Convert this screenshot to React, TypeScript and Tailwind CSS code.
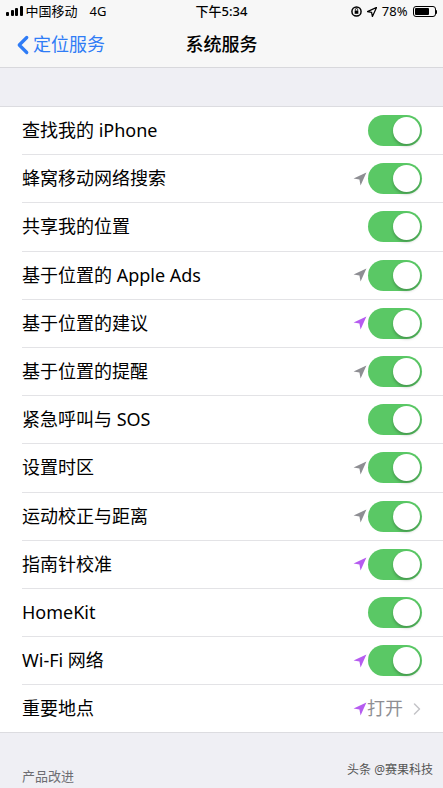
import { ChevronLeft, ChevronRight } from "lucide-react";

type Arrow = "none" | "gray" | "purple";

const rows: { label: string; arrow: Arrow }[] = [
  { label: "查找我的 iPhone", arrow: "none" },
  { label: "蜂窝移动网络搜索", arrow: "gray" },
  { label: "共享我的位置", arrow: "none" },
  { label: "基于位置的 Apple Ads", arrow: "gray" },
  { label: "基于位置的建议", arrow: "purple" },
  { label: "基于位置的提醒", arrow: "gray" },
  { label: "紧急呼叫与 SOS", arrow: "none" },
  { label: "设置时区", arrow: "gray" },
  { label: "运动校正与距离", arrow: "gray" },
  { label: "指南针校准", arrow: "purple" },
  { label: "HomeKit", arrow: "none" },
  { label: "Wi-Fi 网络", arrow: "purple" },
];

const font = { fontFamily: '"Noto Sans", "Noto Sans CJK SC", sans-serif' };

function LocArrow({ color }: { color: Arrow }) {
  const fill = color === "purple" ? "#b65cf0" : "#8e8e93";
  return (
    <svg width="14" height="14" viewBox="0 0 24 24" className="shrink-0">
      <path d="M23 1 L1 11 L11 13 L13 23 Z" fill={fill} />
    </svg>
  );
}

function Toggle() {
  return (
    <div className="flex h-[31px] w-[54px] items-center justify-end rounded-full bg-[#5ac865] p-[2px]">
      <div className="h-[27px] w-[27px] rounded-full bg-white shadow-[0_2px_3px_rgba(0,0,0,0.25)]" />
    </div>
  );
}

function StatusBar() {
  return (
    <div className="flex h-[22px] items-center justify-between px-[6px] pt-[1px] text-[13px] text-black">
      <div className="flex items-center gap-[2px]">
        <div className="flex items-end gap-[1.5px] pb-[1px]">
          <span className="h-[4px] w-[3px] rounded-[1px] bg-black" />
          <span className="h-[6px] w-[3px] rounded-[1px] bg-black" />
          <span className="h-[8px] w-[3px] rounded-[1px] bg-black" />
          <span className="h-[10px] w-[3px] rounded-[1px] bg-black" />
        </div>
        <span className="ml-[1px]">中国移动</span>
        <span className="ml-[10px]">4G</span>
      </div>
      <span className="absolute left-1/2 -translate-x-1/2 font-medium">下午5:34</span>
      <div className="flex items-center gap-[5px]">
        <svg width="11" height="11" viewBox="0 0 12 12">
          <circle cx="6" cy="6" r="5" fill="none" stroke="black" strokeWidth="1.6" />
          <rect x="4" y="5" width="4" height="3.5" fill="black" />
          <path d="M4.8 5 V3.8 a1.2 1.2 0 0 1 2.4 0 V5" fill="none" stroke="black" strokeWidth="1" />
        </svg>
        <svg width="10" height="10" viewBox="0 0 24 24">
          <path d="M23 1 L1 11 L11 13 L13 23 Z" fill="none" stroke="black" strokeWidth="3" strokeLinejoin="round" />
        </svg>
        <span>78%</span>
        <div className="flex items-center">
          <div className="flex h-[11px] w-[23px] items-center rounded-[3px] border border-black p-[1px]">
            <div className="h-full w-[75%] rounded-[1px] bg-black" />
          </div>
          <div className="h-[4px] w-[1.5px] rounded-r bg-black" />
        </div>
      </div>
    </div>
  );
}

export default function App() {
  return (
    <div className="relative h-[788px] w-[443px] overflow-hidden bg-[#efeff4]" style={font}>
      <div className="bg-[#f7f7f7]">
        <StatusBar />
        <div className="relative flex h-[46px] items-center border-b border-[#d8d8dc]">
          <div className="flex items-center pl-[8px] text-[#2f7cf6]">
            <ChevronLeft size={30} strokeWidth={2.6} />
            <span className="-ml-[5px] text-[18px]">定位服务</span>
          </div>
          <span className="absolute left-1/2 -translate-x-1/2 text-[18px] font-medium text-black">
            系统服务
          </span>
        </div>
      </div>

      <div className="h-[38px]" />

      <div className="border-y border-[#dcdce0] bg-white">
        {rows.map((r) => (
          <div key={r.label} className="pl-[22px]">
            <div className="flex h-[48.2px] items-center justify-between border-b border-[#e3e3e6] pr-[21px]">
              <span className="text-[18px] text-black">{r.label}</span>
              <div className="flex items-center gap-[1px]">
                {r.arrow !== "none" && <LocArrow color={r.arrow} />}
                <Toggle />
              </div>
            </div>
          </div>
        ))}
        <div className="flex h-[47px] items-center justify-between pl-[22px] pr-[16px]">
          <span className="text-[18px] text-black">重要地点</span>
          <div className="flex items-center text-[18px] text-[#8e8e93]">
            <LocArrow color="purple" />
            <span>打开</span>
            <ChevronRight size={20} strokeWidth={1.8} className="ml-[4px] text-[#c4c4c8]" />
          </div>
        </div>
      </div>

      <div className="flex items-start justify-between px-[22px] pt-[29px]">
        <span className="mt-[5px] text-[13px] text-[#6d6d72]">产品改进</span>
        <span className="-mr-[12px] -mt-[1px] text-[12px] text-[#555]">头条 @赛果科技</span>
      </div>
    </div>
  );
}
